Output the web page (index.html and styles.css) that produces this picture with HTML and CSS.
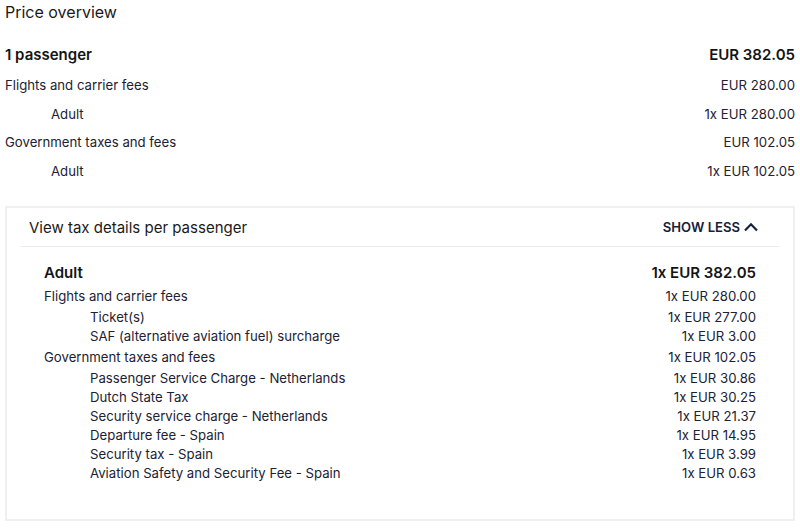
FILE: index.html
```html
<!DOCTYPE html>
<html>
<head>
<meta charset="utf-8">
<link rel="stylesheet" href="styles.css">
</head>
<body>
<div class="page">
  <h1 class="title">Price overview</h1>
  <div class="summary">
    <div class="row total"><span>1 passenger</span><span>EUR 382.05</span></div>
    <div class="row"><span>Flights and carrier fees</span><span>EUR 280.00</span></div>
    <div class="row sub"><span>Adult</span><span>1x EUR 280.00</span></div>
    <div class="row"><span>Government taxes and fees</span><span>EUR 102.05</span></div>
    <div class="row sub"><span>Adult</span><span>1x EUR 102.05</span></div>
  </div>
  <div class="details">
    <div class="details-head">
      <span class="details-title">View tax details per passenger</span>
      <span class="toggle">SHOW LESS
        <svg class="chev" width="14" height="10" viewBox="0 0 14 10"><path d="M1 8.5 L7 2.3 L13 8.5" fill="none" stroke="currentColor" stroke-width="2.2"/></svg>
      </span>
    </div>
    <div class="details-body">
      <div class="drow dtotal"><span>Adult</span><span>1x EUR 382.05</span></div>
      <div class="drow group"><span>Flights and carrier fees</span><span>1x EUR 280.00</span></div>
      <div class="drow item"><span>Ticket(s)</span><span>1x EUR 277.00</span></div>
      <div class="drow item"><span>SAF (alternative aviation fuel) surcharge</span><span>1x EUR 3.00</span></div>
      <div class="drow group"><span>Government taxes and fees</span><span>1x EUR 102.05</span></div>
      <div class="drow item"><span>Passenger Service Charge - Netherlands</span><span>1x EUR 30.86</span></div>
      <div class="drow item"><span>Dutch State Tax</span><span>1x EUR 30.25</span></div>
      <div class="drow item"><span>Security service charge - Netherlands</span><span>1x EUR 21.37</span></div>
      <div class="drow item"><span>Departure fee - Spain</span><span>1x EUR 14.95</span></div>
      <div class="drow item"><span>Security tax - Spain</span><span>1x EUR 3.99</span></div>
      <div class="drow item"><span>Aviation Safety and Security Fee - Spain</span><span>1x EUR 0.63</span></div>
    </div>
  </div>
</div>
</body>
</html>
```
FILE: styles.css
```css
* { box-sizing: border-box; }
html, body { margin: 0; padding: 0; background: #fff; }
body {
  font-family: Inter, "Noto Sans", sans-serif;
  color: #1c2233;
}
.page { padding: 0 5px; }
.title {
  margin: 0;
  font-size: 16px;
  font-weight: 400;
  line-height: 24px;
  color: #1a1a1a;
}
.summary { margin-top: 17px; }
.row {
  display: flex;
  justify-content: space-between;
  font-size: 13.2px;
  line-height: 28.6px;
  height: 28.6px;
}
.row.total {
  font-size: 15px;
  font-weight: 600;
  color: #141414;
  height: 30px;
  line-height: 28.6px;
}
.row.sub span:first-child { padding-left: 46px; }
.details {
  margin-top: 21px;
  border: 2px solid #f0f0f0;
  padding: 0 14px;
  height: 315px;
}
.details-head {
  display: flex;
  justify-content: space-between;
  align-items: center;
  height: 39px;
  padding: 0 21px 0 8px;
  border-bottom: 1px solid #ebebeb;
}
.details-title { font-size: 15px; color: #1a1a1a; }
.toggle {
  display: flex;
  align-items: center;
  gap: 4px;
  font-size: 13.1px;
  font-weight: 600;
  color: #14213d;
}
.chev { display: block; }
.details-body { padding: 15px 23px 0; }
.drow {
  display: flex;
  justify-content: space-between;
  font-size: 13.2px;
  line-height: 19px;
}
.drow.dtotal {
  font-size: 15px;
  font-weight: 600;
  color: #141414;
  line-height: 22px;
  margin-bottom: 3px;
}
.drow.group { margin: 2px 0; }
.drow.item span:first-child { padding-left: 46px; }
```
